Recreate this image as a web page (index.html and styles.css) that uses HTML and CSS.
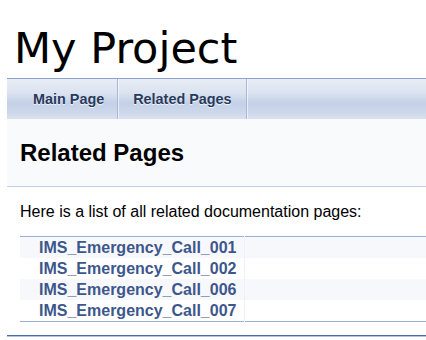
FILE: index.html
```html
<!DOCTYPE html>
<html lang="en">
<head>
    <meta charset="UTF-8">
    <title>My Project: Related Pages</title>
    <link rel="stylesheet" href="styles.css">
</head>
<body>
    <div id="top">
        <div id="projectname">My Project</div>
        <div class="tabs">
            <ul class="tablist">
                <li><a href="#">Main Page</a></li>
                <li class="current"><a href="#">Related Pages</a></li>
            </ul>
        </div>
    </div>

    <div class="header">
        <div class="headertitle">Related Pages</div>
    </div>

    <div class="contents">
        <div class="textblock">Here is a list of all related documentation pages:</div>
        <table class="directory">
            <tr class="even"><td class="entry"><a href="#">IMS_Emergency_Call_001</a></td><td class="desc"></td></tr>
            <tr><td class="entry"><a href="#">IMS_Emergency_Call_002</a></td><td class="desc"></td></tr>
            <tr class="even"><td class="entry"><a href="#">IMS_Emergency_Call_006</a></td><td class="desc"></td></tr>
            <tr><td class="entry"><a href="#">IMS_Emergency_Call_007</a></td><td class="desc"></td></tr>
        </table>
    </div>

    <hr class="footer">
</body>
</html>
```
FILE: styles.css
```css
body {
    margin: 0;
    padding: 0 0 0 7px;
    font-family: "Liberation Sans", Arial, sans-serif;
    font-size: 16px;
    background: #fff;
    color: #000;
}

#projectname {
    font-family: "DejaVu Sans", Tahoma, sans-serif;
    font-size: 43px;
    line-height: 48px;
    padding: 24px 0 6px 7px;
}

.tabs {
    height: 40px;
    border-top: 1px solid #8ca2cc;
    background: linear-gradient(#e8edf6 0%, #dbe3f0 35%, #c3d0e6 60%, #cdd8eb 85%, #d9e1ef 100%);
}
.tablist {
    margin: 0;
    padding: 0 0 0 7px;
    list-style: none;
    display: flex;
    height: 100%;
}
.tablist li {
    display: flex;
    align-items: center;
    padding: 0 13px 0 19px;
    border-right: 1px solid #a6b8da;
    box-shadow: 1px 0 0 rgba(255,255,255,0.6);
}
.tablist li.current {
    padding: 0 14px 0 15px;
}
.tablist a {
    font-weight: bold;
    font-size: 14.4px;
    color: #283a5d;
    text-decoration: none;
    text-shadow: 0 1px 1px rgba(255,255,255,0.9);
}

.header {
    background: #f9fafc;
    border-bottom: 1px solid #c4cfe5;
    height: 67px;
    display: flex;
    align-items: center;
    padding-left: 13px;
}
.headertitle {
    font-weight: bold;
    font-size: 24px;
}

.contents {
    padding: 17px 0 0 13px;
}
.textblock {
    line-height: 16px;
}
.directory {
    margin-top: 16px;
    width: 100%;
    border-collapse: collapse;
    border-top: 1px solid #9cafd4;
    border-bottom: 1px solid #9cafd4;
}
.directory td {
    padding: 0;
    height: 21px;
    vertical-align: middle;
}
.directory tr.even {
    background: #f7f8fb;
}
.directory td.entry {
    width: 205px;
    padding-left: 19px;
    border-right: 1px solid #eef1f7;
    white-space: nowrap;
}
.directory a {
    color: #3d578c;
    font-weight: bold;
    font-size: 16px;
    line-height: 21px;
    text-decoration: none;
}

.footer {
    margin: 13px 0 0 0;
    border: 0;
    border-top: 1px solid #4a6aaa;
    border-bottom: 1px solid #b5c3df;
    height: 0;
}
```
